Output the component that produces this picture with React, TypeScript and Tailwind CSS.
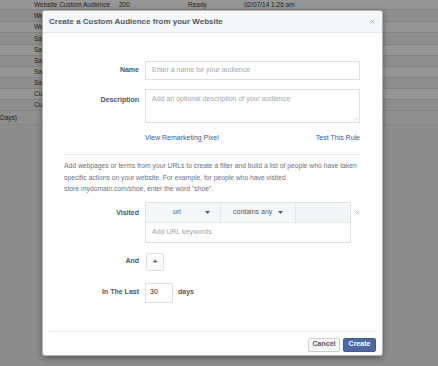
import React from "react";

const rows: { h: number; a: string; b?: string; c?: string; d?: string }[] = [
  { h: 10, a: "Website Custom Audience", b: "200", c: "Ready", d: "02/07/14 1:26 am" },
  { h: 12, a: "Website Custom Audience" },
  { h: 11, a: "Website Custom Audience" },
  { h: 12, a: "Saved Audience" },
  { h: 11, a: "Saved Audience" },
  { h: 11, a: "Saved Audience" },
  { h: 11, a: "Saved Audience" },
  { h: 11, a: "Saved Audience" },
  { h: 11, a: "Custom Audience" },
  { h: 11, a: "Custom Audience" },
];

function Caret() {
  return (
    <svg width="5" height="3" viewBox="0 0 5 3" className="inline-block">
      <path d="M0 0 H5 L2.5 3 Z" fill="#4e5665" />
    </svg>
  );
}

function Cross({ color }: { color: string }) {
  return (
    <svg width="5" height="5" viewBox="0 0 5 5">
      <path d="M0.5 0.5 L4.5 4.5 M4.5 0.5 L0.5 4.5" stroke={color} strokeWidth="0.9" />
    </svg>
  );
}

export default function App() {
  return (
    <div
      className="relative w-[438px] h-[366px] overflow-hidden bg-[#8c8c8c]"
      style={{ fontFamily: '"Liberation Sans", Arial, sans-serif' }}
    >
      {/* background table */}
      <div className="flex flex-col">
        {rows.map((r, i) => (
          <div
            key={i}
            className={`flex items-center text-[6.5px] whitespace-nowrap text-[#1e1e1e] border-b border-[#838383] ${
              i % 2 === 0 ? "bg-[#959595]" : "bg-[#8e8e8e]"
            }`}
            style={{ height: r.h }}
          >
            <span className="pl-[34px] w-[119px]">{r.a}</span>
            <span className="w-[69px]">{r.b}</span>
            <span className="w-[56px]">{r.c}</span>
            <span>{r.d}</span>
          </div>
        ))}
        <div className="h-[14px] flex items-center text-[6.5px] text-[#1e1e1e] bg-[#8f8f8f] border-b border-[#858585]">
          <span className="pl-0">Days)</span>
        </div>
      </div>

      {/* modal */}
      <div className="absolute left-[42px] top-[10px] w-[341px] h-[346px] bg-white rounded-[3px] border border-black/30 shadow-[0_2px_6px_rgba(0,0,0,0.35)] flex flex-col">
        <div className="h-[22px] shrink-0 bg-[#f6f7f9] border-b border-[#e5e5e5] rounded-t-[3px] flex items-center justify-between pl-[6px] pr-[7px]">
          <span className="text-[8px] font-bold text-[#4e5665]">
            Create a Custom Audience from your Website
          </span>
          <Cross color="#a7abb3" />
        </div>

        <div className="pl-[21px] pr-[22px] flex flex-col text-[7px]">
          {/* Name */}
          <div className="mt-[28px] flex items-center">
            <div className="w-[75px] text-right font-bold text-[#4e5665]">Name</div>
            <div className="ml-[6px] w-[215px] h-[19px] border border-[#dddfe2] flex items-center px-[6px] text-[#a2a6ae]">
              Enter a name for your audience
            </div>
          </div>
          {/* Description */}
          <div className="mt-[9px] flex items-start">
            <div className="w-[75px] text-right font-bold text-[#4e5665] mt-[6px]">Description</div>
            <div className="relative ml-[6px] w-[215px] h-[34px] border border-[#dddfe2] px-[6px] pt-[4px] text-[#a2a6ae]">
              Add an optional description of your audience
              <svg width="5" height="5" viewBox="0 0 5 5" className="absolute right-[1px] bottom-[1px]">
                <path d="M1 4.5 L4.5 1 M3 4.5 L4.5 3" stroke="#b5b9c0" strokeWidth="0.6" />
              </svg>
            </div>
          </div>
          {/* links */}
          <div className="mt-[10px] h-[10px] leading-[10px] flex justify-between pl-[81px] text-[#3b5998]">
            <span>View Remarketing Pixel</span>
            <span>Test This Rule</span>
          </div>
          <div className="mt-[11px] h-px bg-[#e9eaed]" />
          <div className="mt-[5px] leading-[11.5px] text-[6.75px] text-[#6a7180] whitespace-nowrap flex flex-col">
            <span>
              Add webpages or terms from your URLs to create a filter and build a list of people who have taken
            </span>
            <span>specific actions on your website. For example, for people who have visited</span>
            <span>store.mydomain.com/shoe, enter the word "shoe".</span>
          </div>

          {/* Visited */}
          <div className="mt-[7px] flex items-start">
            <div className="w-[75px] text-right font-bold text-[#4e5665] mt-[6px]">Visited</div>
            <div className="ml-[6px] w-[206px] border border-[#dddfe2] flex flex-col">
              <div className="h-[20px] flex border-b border-[#e5e6e9]">
                <div className="w-[75px] bg-[#f6f7f9] border-r border-[#e5e6e9] flex items-center justify-between pl-[27px] pr-[10px] text-[#4e5665]">
                  <span>url</span>
                  <Caret />
                </div>
                <div className="w-[75px] bg-[#f6f7f9] border-r border-[#e5e6e9] flex items-center pl-[12px] gap-[6px] text-[#4e5665]">
                  <span>contains any</span>
                  <Caret />
                </div>
                <div className="flex-1 bg-[#f4f5f7]" />
              </div>
              <div className="h-[19px] flex items-center px-[6px] text-[#a2a6ae]">Add URL keywords</div>
            </div>
            <div className="ml-[4px] mt-[8px]">
              <Cross color="#b9bcc2" />
            </div>
          </div>

          {/* And */}
          <div className="mt-[10px] flex items-center">
            <div className="w-[75px] text-right font-bold text-[#4e5665]">And</div>
            <div className="ml-[7px] w-[18px] h-[18px] border border-[#dddfe2] rounded-[2px] bg-gradient-to-b from-white to-[#f6f7f9] flex items-center justify-center text-[#4e5665] font-bold text-[8px]">
              +
            </div>
          </div>

          {/* In the last */}
          <div className="mt-[12px] flex items-center">
            <div className="w-[75px] text-right font-bold text-[#4e5665]">In The Last</div>
            <div className="ml-[6px] w-[28px] h-[20px] border border-[#dddfe2] flex items-center px-[4px] text-[#1d2129]">
              30
            </div>
            <span className="ml-[5px] font-bold text-[#4e5665]">days</span>
          </div>
        </div>

        <div className="mt-[28px] mx-[6px] h-px bg-[#e9eaed]" />
        <div className="mt-[6px] pr-[6px] flex justify-end gap-[3px]">
          <div className="w-[32px] h-[14px] border border-[#cdd0d6] rounded-[2px] bg-[#f6f7f9] flex items-center justify-center text-[7px] font-bold text-[#4e5665]">
            Cancel
          </div>
          <div className="w-[33px] h-[14px] border border-[#415a93] rounded-[2px] bg-[#4e69a2] flex items-center justify-center text-[7px] font-bold text-white">
            Create
          </div>
        </div>
      </div>
    </div>
  );
}
